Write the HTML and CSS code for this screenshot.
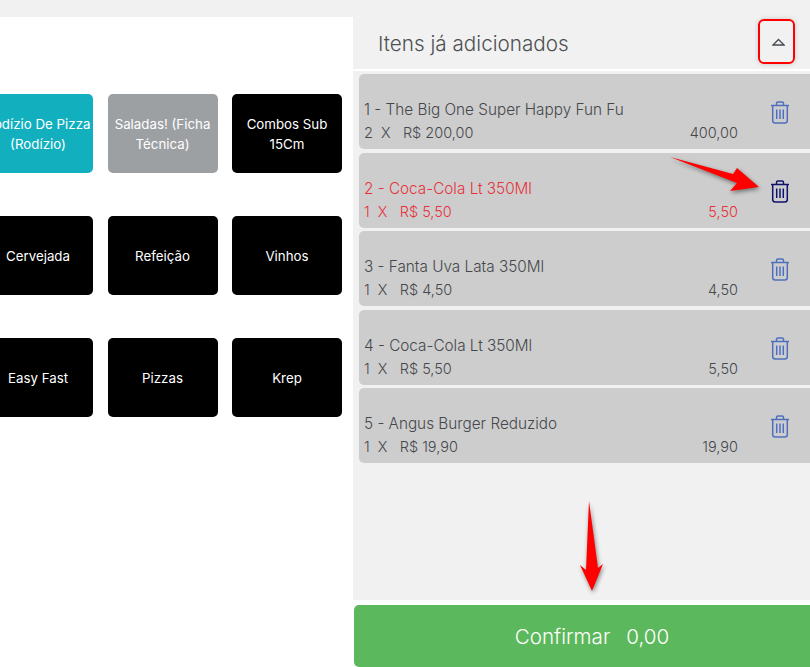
FILE: index.html
```html
<!DOCTYPE html>
<html lang="pt">
<head>
<meta charset="utf-8">
<title>Itens</title>
<link rel="stylesheet" href="styles.css">
</head>
<body>
<svg class="defs" width="0" height="0"><defs>
<symbol id="trash" viewBox="0 0 20 23"><path d="M1 4.500h18M6.500 4.500V2.600Q6.500 1 8 1h4q1.500 0 1.500 1.600V4.500M2.700 4.500V19.500q0 2.500 2.500 2.500h9.600q2.500 0 2.500-2.500V4.500M6.700 8.500V18M10 8.500V18M13.300 8.500V18" fill="none" stroke="currentColor" stroke-width="1.500"/></symbol>
</defs></svg>
<div class="top"></div>
<main class="layout">
  <section class="left">
    <div class="grid">
      <button class="tile teal">Rodízio De Pizza (Rodízio)</button>
      <button class="tile gray">Saladas! (Ficha Técnica)</button>
      <button class="tile">Combos Sub 15Cm</button>
      <button class="tile">Cervejada</button>
      <button class="tile">Refeição</button>
      <button class="tile">Vinhos</button>
      <button class="tile">Easy Fast</button>
      <button class="tile">Pizzas</button>
      <button class="tile">Krep</button>
    </div>
  </section>
  <section class="right">
    <header class="head">
      <h2>Itens já adicionados</h2>
      <div class="toggle"><svg width="13" height="8" viewBox="0 0 13 8"><path d="M1 7h11L6.500 1.500z" fill="none" stroke="#454b52" stroke-width="1.300"/></svg></div>
    </header>
    <div class="list">
      <article class="card">
        <div class="info"><div class="name">1 - The Big One Super Happy Fun Fu</div><div class="qty"><span>2&nbsp; X &nbsp; R$ 200,00</span><span>400,00</span></div></div>
        <svg class="bin"><use href="#trash"/></svg>
      </article>
      <article class="card active">
        <div class="info"><div class="name">2 - Coca-Cola Lt 350Ml</div><div class="qty"><span>1&nbsp; X &nbsp; R$ 5,50</span><span>5,50</span></div></div>
        <svg class="bin"><use href="#trash"/></svg>
      </article>
      <article class="card">
        <div class="info"><div class="name">3 - Fanta Uva Lata 350Ml</div><div class="qty"><span>1&nbsp; X &nbsp; R$ 4,50</span><span>4,50</span></div></div>
        <svg class="bin"><use href="#trash"/></svg>
      </article>
      <article class="card">
        <div class="info"><div class="name">4 - Coca-Cola Lt 350Ml</div><div class="qty"><span>1&nbsp; X &nbsp; R$ 5,50</span><span>5,50</span></div></div>
        <svg class="bin"><use href="#trash"/></svg>
      </article>
      <article class="card">
        <div class="info"><div class="name">5 - Angus Burger Reduzido</div><div class="qty"><span>1&nbsp; X &nbsp; R$ 19,90</span><span>19,90</span></div></div>
        <svg class="bin"><use href="#trash"/></svg>
      </article>
    </div>
    <button class="confirm"><span>Confirmar</span><span>0,00</span></button>
  </section>
</main>
<svg class="arrow a1" width="108" height="52" viewBox="0 0 108 52"><path d="M2 1 L65 18 L69 12 L91 31 L62 35 L69 27 Z" fill="#f00"/></svg>
<svg class="arrow a2" width="30" height="96" viewBox="0 0 30 96"><path d="M12 2 L21 69 L26 65 L15 92 L3 66 L9 71 Z" fill="#f00"/></svg>
</body>
</html>
```
FILE: styles.css
```css
* { box-sizing: border-box; }
html, body { margin: 0; height: 100%; overflow: hidden; }
body { width: 810px; height: 667px; background: #fff; font-family: Inter, "Noto Sans", sans-serif; font-weight: 300; position: relative; }
.defs { position: absolute; }
.top { height: 17px; background: #f1f1f1; }
.layout { display: flex; height: 650px; }
.left { width: 353px; overflow: hidden; flex: none; }
.grid { display: grid; grid-template-columns: repeat(3, 110px); column-gap: 14.500px; row-gap: 43px; margin: 77px 0 0 -17px; }
.tile { height: 79px; border: 0; border-radius: 5px; background: #000; color: #fff; font: 400 13.300px/20px Inter, sans-serif; padding: 0 1px; }
.teal { background: #12b0bf; }
.gray { background: #9da0a3; }
.right { flex: 1; display: flex; flex-direction: column; }
.head { height: 52px; background: #f1f1f1; margin-bottom: 2px; display: flex; align-items: center; justify-content: space-between; padding: 0 15px 0 25px; }
.head h2 { margin: 0; font-size: 20.700px; font-weight: 300; color: #4d4f52; }
.toggle { width: 37px; height: 45px; border: 2px solid #f00; border-radius: 6px; display: flex; align-items: center; justify-content: center; box-shadow: 0 0 5px rgba(0,0,0,.18); margin-top: -3px; padding-left: 4px; }
.list { flex: 1; background: #f1f1f1; padding: 3px 0 0 6px; display: flex; flex-direction: column; gap: 3.500px; }
.card { height: 75px; background: #cdcdcd; border-radius: 5px 0 0 5px; display: flex; align-items: flex-end; padding: 0 20px 5px 5px; color: #45484c; }
.info { width: 374px; font-size: 14.500px; }
.name { font-size: 15.300px; line-height: 23px; }
.qty { display: flex; justify-content: space-between; line-height: 23px; }
.bin { width: 20px; height: 23px; margin: 0 0 20px 32px; color: #4f6fbe; }
.active { color: #e8323c; }
.active .bin { color: #10136e; }
.confirm { height: 62px; margin: 5px 0 0 1px; padding: 0 0 0 20px; border: 0; border-radius: 5px 0 0 5px; background: #5cb85c; color: #fff; font: 300 20.600px Inter, sans-serif; display: flex; align-items: center; justify-content: center; gap: 16px; }
.arrow { position: absolute; filter: drop-shadow(1px 2px 2px rgba(0,0,0,.45)); }
.a1 { left: 668px; top: 156px; }
.a2 { left: 577px; top: 499px; }
```
